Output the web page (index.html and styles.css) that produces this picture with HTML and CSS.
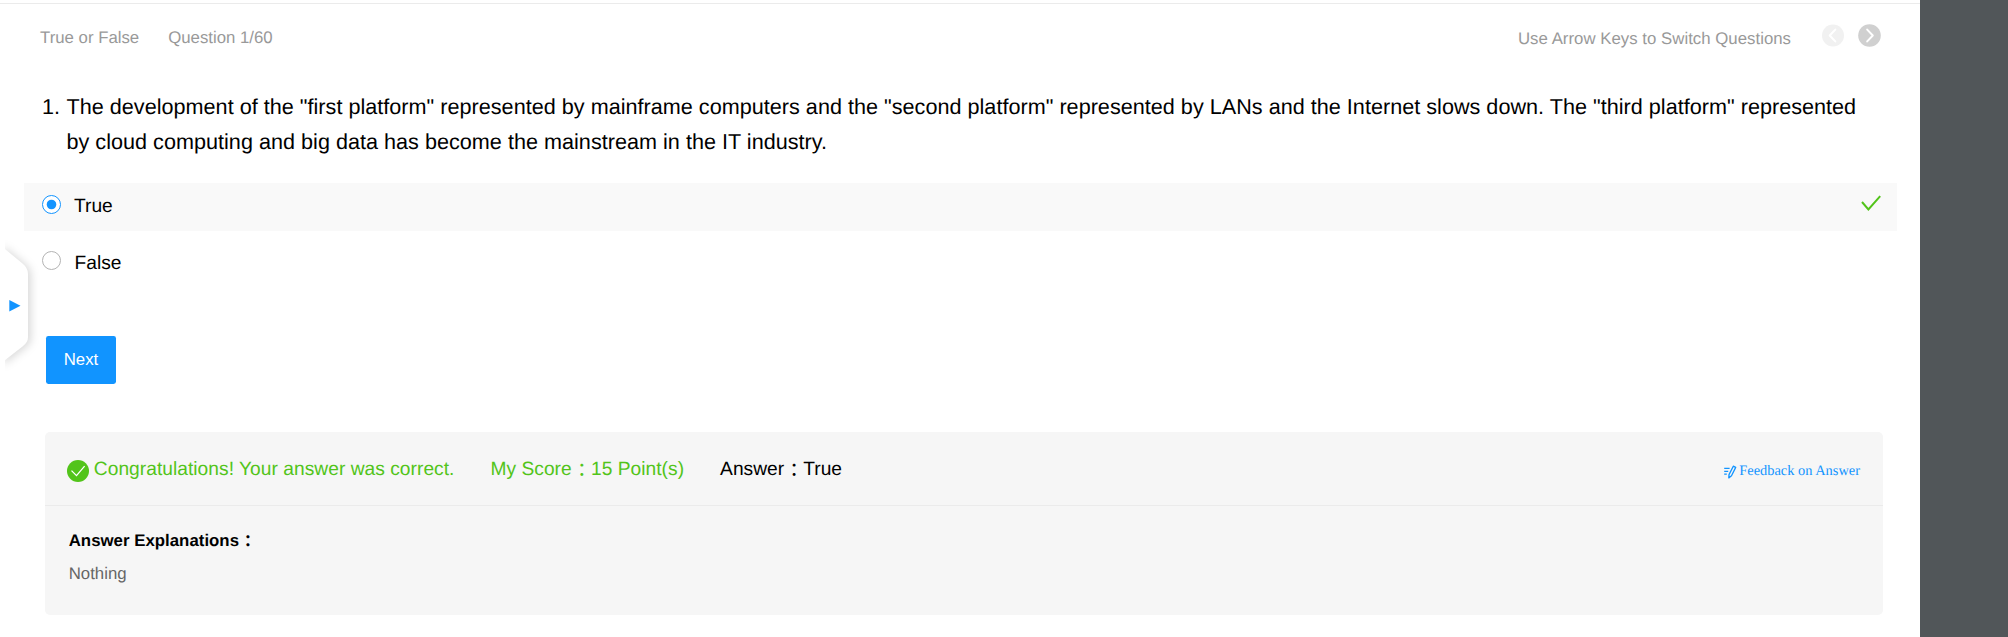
FILE: index.html
```html
<!DOCTYPE html>
<html lang="en">
<head>
<meta charset="utf-8">
<title>Question 1/60</title>
<link rel="stylesheet" href="styles.css">
</head>
<body>
<main class="page">
  <header class="topbar">
    <div class="meta"><span>True or False</span><span>Question 1/60</span></div>
    <div class="switcher">
      <span class="hint">Use Arrow Keys to Switch Questions</span>
      <svg class="nav prev" viewBox="0 0 23 23"><circle cx="11" cy="11.5" r="11"/><path d="M13.3 5.6 7.7 11.5l5.6 5.9"/></svg>
      <svg class="nav" viewBox="0 0 23 23"><circle cx="11.5" cy="11.5" r="11.3"/><path d="M9.2 5.6l5.6 5.9-5.6 5.9"/></svg>
    </div>
  </header>

  <section class="question">
    <span class="number">1.</span>
    <p class="stem">The development of the "first platform" represented by mainframe computers and the "second platform" represented by LANs and the Internet slows down. The "third platform" represented<br>by cloud computing and big data has become the mainstream in the IT industry.</p>
  </section>

  <section class="options">
    <div class="option selected">
      <svg class="radio" viewBox="0 0 19 19"><circle class="ring" cx="9.5" cy="9.5" r="9"/><circle class="dot" cx="9.5" cy="9.5" r="4.8"/></svg>
      <span class="label">True</span>
      <svg class="tick" viewBox="0 0 20 16"><path d="M1 7 7.4 14.4 19.2 1.2"/></svg>
    </div>
    <div class="option">
      <svg class="radio" viewBox="0 0 19 19"><circle class="ring" cx="9.5" cy="9.5" r="9"/></svg>
      <span class="label">False</span>
    </div>
  </section>

  <button class="next">Next</button>

  <section class="result">
    <div class="summary">
      <svg class="ok" viewBox="0 0 22 22"><circle cx="11" cy="11" r="11"/><path d="M4.5 10.6l5 5L17.6 6.2"/></svg>
      <span class="congrats">Congratulations! Your answer was correct.</span>
      <span class="score">My Score<span class="colon">：</span>15 Point(s)</span>
      <span class="answer">Answer<span class="colon">：</span>True</span>
      <a class="feedback">
        <svg viewBox="0 0 13 14"><path d="M.2 3.4h5.4M.2 6.3h4M.2 9.1h2.6M9.3 1.2l2.4 1.2-4.2 8.4-2.7 2.1.2-3.3z"/></svg>
        <span>Feedback on Answer</span>
      </a>
    </div>
    <div class="explain">
      <h2>Answer Explanations<span class="colon">：</span></h2>
      <p>Nothing</p>
    </div>
  </section>

  <svg class="drawer" viewBox="0 0 44 136">
    <path class="tab" d="M0 9 22.5 27.5Q28 32 28 38V101Q28 106.500 22.500 110.500L0 128Z"/>
    <path class="play" d="M9.3 64 20.5 69.8 9.3 75.6Z"/>
  </svg>
</main>
</body>
</html>
```
FILE: styles.css
```css
* { box-sizing: border-box; }
body {
  margin: 0;
  background: #515659;
  font-family: "Liberation Sans", Arial, "Noto Sans CJK JP", sans-serif;
  font-size: 16.8px;
  color: #000;
  text-rendering: geometricPrecision;
}
.page {
  position: relative;
  width: 1920px;
  height: 637px;
  padding-top: 3px;
  background: #fff;
  overflow: hidden;
}
.topbar {
  display: flex;
  justify-content: space-between;
  height: 86px;
  padding: 20px 39px 0 40px;
  border-top: 1px solid #ebebeb;
  color: #999;
}
.meta { display: flex; gap: 29px; line-height: 27px; }
.switcher { display: flex; align-items: flex-start; }
.hint { line-height: 29px; margin-right: 31px; letter-spacing: .02px; }
.nav { width: 23px; height: 23px; }
.nav circle { fill: #d0d0d0; }
.nav path { fill: none; stroke: #fff; stroke-width: 2; stroke-linecap: round; stroke-linejoin: round; }
.prev { margin-right: 13px; }
.prev circle { fill: #f1f1f1; }

.question {
  display: flex;
  padding-left: 42px;
  font-size: 21.6px;
  line-height: 35px;
  letter-spacing: .02px;
}
.number { width: 24.5px; }
.stem { margin: 0; white-space: nowrap; }

.options {
  display: grid;
  gap: 9px;
  padding: 24px 23px 0 24px;
}
.option {
  display: flex;
  align-items: flex-start;
  height: 48px;
  padding: 12px 16px 0 18px;
  font-size: 19.2px;
  line-height: 22px;
}
.option + .option { padding-top: 11px; }
.selected { background: #f9f9f9; }
.radio { width: 19px; height: 19px; margin-right: 13px; }
.ring { fill: #fff; stroke: #b3b3b3; }
.selected .ring { stroke: #1294ff; }
.dot { fill: #1294ff; }
.label { flex: 1; padding-top: 1px; }
.option + .option .label { padding-top: 2px; padding-left: .6px; }
.tick { width: 20px; height: 16px; }
.tick path { fill: none; stroke: #52c41a; stroke-width: 2; }

.next {
  display: block;
  width: 70px;
  height: 48px;
  margin: 48px 0 0 46px;
  padding: 0;
  border: 0;
  border-radius: 2.4px;
  background: #1194ff;
  color: #fff;
  font: 16.8px "Liberation Sans", Arial, sans-serif;
}

.result {
  width: 1838px;
  height: 183px;
  margin: 48px 0 0 45px;
  border-radius: 5px;
  background: #f6f6f6;
}
.summary {
  display: flex;
  align-items: flex-start;
  height: 74px;
  padding: 26px 23px 0 22px;
  border-bottom: 1px solid #ebebeb;
  font-size: 19.2px;
  line-height: 24px;
}
.ok { width: 22px; height: 22px; margin: 2px 4.8px 0 0; }
.ok circle { fill: #52c41a; }
.ok path { fill: none; stroke: #fff; stroke-width: 1.3; }
.congrats, .score { color: #52c41a; margin-right: 36px; }
.congrats, .score { letter-spacing: .03px; }
.colon { position: relative; top: 2px; left: .5px; line-height: 1; }
h2 .colon { top: 1px; }
.feedback {
  display: flex;
  align-items: flex-start;
  margin-left: auto;
  color: #1294ff;
  font: 14.4px/26px "Liberation Serif", "Times New Roman", serif;
}
.feedback svg { width: 13px; height: 14px; margin: 7px 2px 0 0; }
.feedback path { fill: none; stroke: currentColor; stroke-width: 1.3; stroke-linejoin: round; }
.explain { padding: 21px 23px 0 24px; }
.explain h2, .explain p { margin: 0 0 0 -.3px; font-size: 16.8px; line-height: 28px; }
.explain h2 { letter-spacing: .03px; }
.explain p { padding-top: 5px; color: #666; }

.drawer {
  position: absolute;
  left: 0;
  top: 236px;
  width: 44px;
  height: 136px;
  clip-path: inset(0 0 0 5px);
}
.tab { fill: #fff; filter: drop-shadow(3px 1px 4px rgba(0, 0, 0, .15)); }
.play { fill: #1294ff; }
```
